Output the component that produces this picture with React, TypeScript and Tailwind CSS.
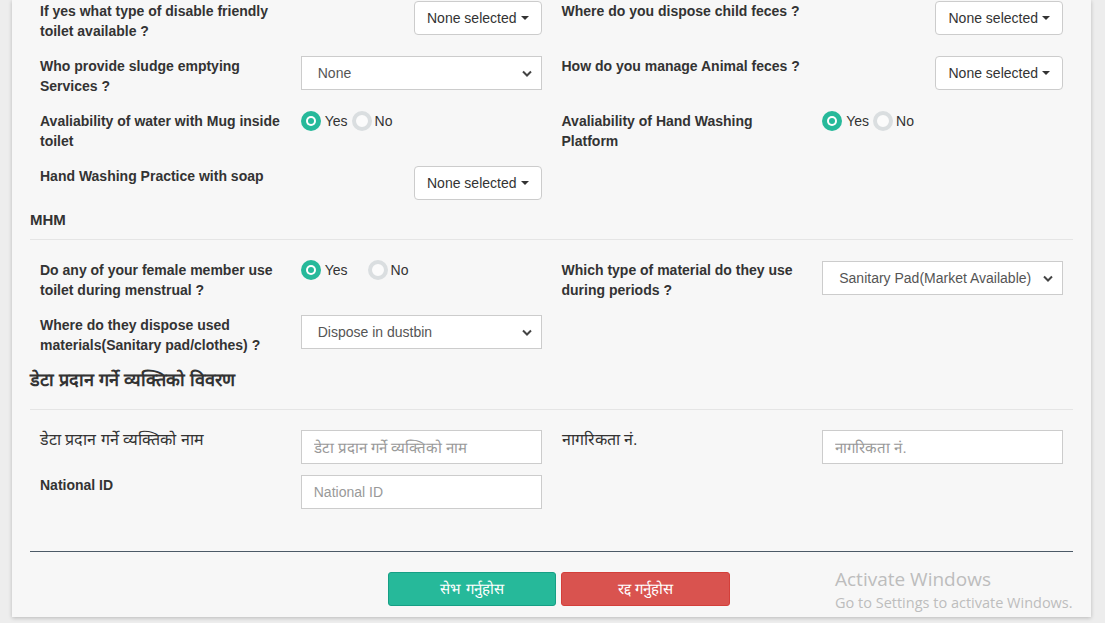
import React from "react";

const Radio = ({ checked }: { checked?: boolean }) =>
  checked ? (
    <span className="w-5 h-5 rounded-full bg-[#26b99a] flex items-center justify-center shrink-0">
      <span className="w-[10px] h-[10px] rounded-full bg-white flex items-center justify-center">
        <span className="w-[6px] h-[6px] rounded-full bg-[#26b99a]" />
      </span>
    </span>
  ) : (
    <span className="block w-5 h-5 rounded-full border-[4px] border-[#dadee0] bg-[#fbfbfb] shrink-0" />
  );

const YesNo = ({ wide }: { wide?: boolean }) => (
  <div className="flex items-center h-5 text-[14px] text-[#333]">
    <Radio checked />
    <span className="ml-[4px]">Yes</span>
    <span className={wide ? "ml-[20px]" : "ml-[4px]"}>
      <Radio />
    </span>
    <span className="ml-[3px]">No</span>
  </div>
);

const MultiBtn = () => (
  <div className="flex justify-end">
    <button className="h-[34px] px-[12px] border border-[#ccc] rounded-[4px] bg-white text-[14px] text-[#333] flex items-center">
      None selected
      <span className="ml-[4px] w-0 h-0 border-l-[4px] border-r-[4px] border-t-[4px] border-l-transparent border-r-transparent border-t-[#333]" />
    </button>
  </div>
);

const SelectBox = ({ value }: { value: string }) => (
  <div className="h-[34px] w-full border border-[#ccc] bg-white pl-[16px] pr-[9px] flex items-center justify-between text-[14px] text-[#555]">
    <span>{value}</span>
    <svg width="10" height="7" viewBox="0 0 10 7" fill="none">
      <path d="M1 1.5L5 5.5L9 1.5" stroke="#444" strokeWidth="2" />
    </svg>
  </div>
);

const TextInput = ({ placeholder, small }: { placeholder: string; small?: boolean }) => (
  <input
    placeholder={placeholder}
    className={`h-[34px] w-full border border-[#ccc] bg-white px-[12px] text-[#555] placeholder:text-[#999] outline-none ${
      small ? "text-[14px]" : "text-[15px]"
    }`}
  />
);

const Cell = ({
  label,
  children,
  bold = true,
}: {
  label?: string;
  children?: React.ReactNode;
  bold?: boolean;
}) => (
  <div className="grid grid-cols-2">
    <div
      className={`px-[10px] pb-[5px] leading-[20px] text-[#333] ${
        bold ? "font-bold text-[14px]" : "text-[16px]"
      }`}
    >
      {label}
    </div>
    <div className="px-[10px]">{children}</div>
  </div>
);

const Row = ({ children, gap = "mb-[10px]" }: { children: React.ReactNode; gap?: string }) => (
  <div className={`grid grid-cols-2 ${gap}`}>{children}</div>
);

export default function App() {
  return (
    <div className="h-[623px] bg-[#ededed] overflow-hidden relative font-['Liberation_Sans',Arial,sans-serif]">
      <div className="ml-[12px] w-[1079px] h-[617px] bg-[#f7f7f7] shadow-[0_1px_4px_rgba(0,0,0,0.22)] px-[18px] pt-[1px]">
        <Row>
          <Cell label="If yes what type of disable friendly toilet available ?">
            <MultiBtn />
          </Cell>
          <Cell label="Where do you dispose child feces ?">
            <MultiBtn />
          </Cell>
        </Row>
        <Row>
          <Cell label="Who provide sludge emptying Services ?">
            <SelectBox value="None" />
          </Cell>
          <Cell label="How do you manage Animal feces ?">
            <MultiBtn />
          </Cell>
        </Row>
        <Row>
          <Cell label="Avaliability of water with Mug inside toilet">
            <YesNo />
          </Cell>
          <Cell label="Avaliability of Hand Washing Platform">
            <YesNo />
          </Cell>
        </Row>
        <Row>
          <Cell label="Hand Washing Practice with soap">
            <MultiBtn />
          </Cell>
          <Cell />
        </Row>

        <div className="h-[20px] leading-[20px] text-[15px] font-bold text-[#333]">MHM</div>
        <div className="mt-[9px] h-px bg-[#e5e5e5]" />

        <div className="mt-[20px]">
          <Row>
            <Cell label="Do any of your female member use toilet during menstrual ?">
              <YesNo wide />
            </Cell>
            <Cell label="Which type of material do they use during periods ?">
              <div className="pt-px">
                <SelectBox value="Sanitary Pad(Market Available)" />
              </div>
            </Cell>
          </Row>
          <Row>
            <Cell label="Where do they dispose used materials(Sanitary pad/clothes) ?">
              <SelectBox value="Dispose in dustbin" />
            </Cell>
            <Cell />
          </Row>
        </div>

        <div className="h-[20px] leading-[20px] text-[18px] font-bold text-[#333]">
          डेटा प्रदान गर्ने व्यक्तिको विवरण
        </div>
        <div className="mt-[19px] h-px bg-[#e5e5e5]" />

        <div className="mt-[20px]">
          <Row gap="mb-[11px]">
            <Cell label="डेटा प्रदान गर्ने व्यक्तिको नाम" bold={false}>
              <TextInput placeholder="डेटा प्रदान गर्ने व्यक्तिको नाम" />
            </Cell>
            <Cell label="नागरिकता नं." bold={false}>
              <TextInput placeholder="नागरिकता नं." />
            </Cell>
          </Row>
          <Row>
            <Cell label="National ID">
              <TextInput placeholder="National ID" small />
            </Cell>
            <Cell />
          </Row>
        </div>

        <div className="mt-[42px] h-px bg-[#4c5a67]" />

        <div className="mt-[20px] flex gap-[5px] pl-[358px]">
          <button className="w-[168px] h-[34px] rounded-[3px] bg-[#26b99a] border border-[#169f85] text-white text-[15px]">
            सेभ गर्नुहोस
          </button>
          <button className="w-[169px] h-[34px] rounded-[3px] bg-[#d9534f] border border-[#d43f3a] text-white text-[15px]">
            रद्द गर्नुहोस
          </button>
        </div>
      </div>

      <div className="absolute left-[835px] top-[567px] font-['Open_Sans',sans-serif] text-[#bdbdbd] pointer-events-none">
        <div className="text-[19px] leading-[25px]">Activate Windows</div>
        <div className="text-[14.5px] leading-[21px]">Go to Settings to activate Windows.</div>
      </div>
    </div>
  );
}
